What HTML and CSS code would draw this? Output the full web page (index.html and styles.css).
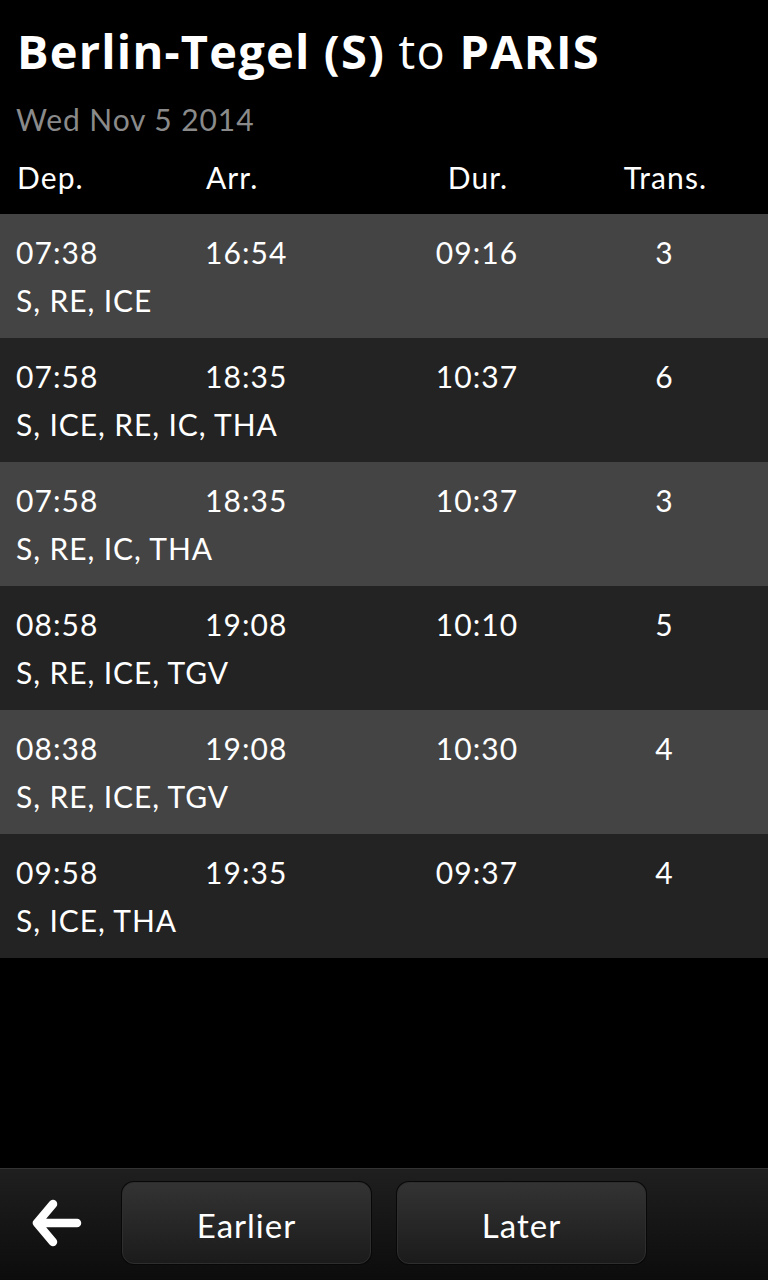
FILE: index.html
```html
<!DOCTYPE html>
<html>
<head>
<meta charset="utf-8">
<link rel="stylesheet" href="styles.css">
</head>
<body>
<div class="screen">
  <header class="head">
    <h1 class="title"><b>Berlin-Tegel (S)</b> to <b>PARIS</b></h1>
    <div class="date">Wed Nov 5 2014</div>
    <div class="cols">
      <span class="c-dep">Dep.</span>
      <span class="c-arr">Arr.</span>
      <span class="c-dur">Dur.</span>
      <span class="c-tr">Trans.</span>
    </div>
  </header>
  <ul class="list">
    <li class="row light"><div class="cols"><span class="c-dep">07:38</span><span class="c-arr">16:54</span><span class="c-dur">09:16</span><span class="c-tr">3</span></div><div class="trains">S, RE, ICE</div></li>
    <li class="row dark"><div class="cols"><span class="c-dep">07:58</span><span class="c-arr">18:35</span><span class="c-dur">10:37</span><span class="c-tr">6</span></div><div class="trains">S, ICE, RE, IC, THA</div></li>
    <li class="row light"><div class="cols"><span class="c-dep">07:58</span><span class="c-arr">18:35</span><span class="c-dur">10:37</span><span class="c-tr">3</span></div><div class="trains">S, RE, IC, THA</div></li>
    <li class="row dark"><div class="cols"><span class="c-dep">08:58</span><span class="c-arr">19:08</span><span class="c-dur">10:10</span><span class="c-tr">5</span></div><div class="trains">S, RE, ICE, TGV</div></li>
    <li class="row light"><div class="cols"><span class="c-dep">08:38</span><span class="c-arr">19:08</span><span class="c-dur">10:30</span><span class="c-tr">4</span></div><div class="trains">S, RE, ICE, TGV</div></li>
    <li class="row dark"><div class="cols"><span class="c-dep">09:58</span><span class="c-arr">19:35</span><span class="c-dur">09:37</span><span class="c-tr">4</span></div><div class="trains">S, ICE, THA</div></li>
  </ul>
  <footer class="bar">
    <button class="back" aria-label="Back">
      <svg width="60" height="60" viewBox="0 0 60 60"><path d="M24 11 L8 30 L24 49 M9 30 H48" fill="none" stroke="#fff" stroke-width="8.5" stroke-linecap="round" stroke-linejoin="round"/></svg>
    </button>
    <button class="btn">Earlier</button>
    <button class="btn">Later</button>
  </footer>
</div>
</body>
</html>
```
FILE: styles.css
```css
* { box-sizing: border-box; }
html, body { margin: 0; padding: 0; background: #000; }
body { font-family: Lato, "Open Sans", sans-serif; color: #fff; }
.screen { width: 768px; height: 1280px; display: flex; flex-direction: column; background: #000; }
.head { padding: 23px 16px 0 17px; height: 214px; }
.title { margin: 0; font-family: "Open Sans", Lato, sans-serif; font-size: 47px; line-height: 56px; font-weight: 400; letter-spacing: 1.2px; }
.title b { font-weight: 700; }
.date { margin-top: 22px; margin-left: -1px; font-size: 30px; line-height: 36px; color: #8a8a8a; letter-spacing: 0.9px; }
.head .cols { margin-top: 22px; }
.cols { display: grid; grid-template-columns: 189px 174px 196px 179px; font-size: 30px; line-height: 36px; letter-spacing: 1.1px; }
.c-dur, .c-tr { text-align: center; }
.list { list-style: none; margin: 0; padding: 0; }
.row { height: 124px; padding: 20px 16px 0 16px; }
.row.light { background: #444; }
.row.dark { background: #232323; }
.trains { font-size: 30px; line-height: 36px; margin-top: 12px; letter-spacing: 0.9px; }
.bar { margin-top: auto; height: 112px; border-top: 1px solid #333; background: linear-gradient(#1f1f1f, #0c0c0c); display: flex; align-items: flex-start; padding-top: 13px; }
.back { width: 122px; height: 81px; background: none; border: 0; padding: 0 0 0 29px; display: flex; align-items: center; }
.btn { width: 249px; height: 82px; margin-right: 26px; border-radius: 12px; border: 1px solid #2e2e2e; background: linear-gradient(#333, #1b1b1b); color: #fff; font-family: Lato, sans-serif; font-size: 33px; letter-spacing: 1px; box-shadow: 0 0 0 1px #080808; padding: 3px 0 0 0; }
```
